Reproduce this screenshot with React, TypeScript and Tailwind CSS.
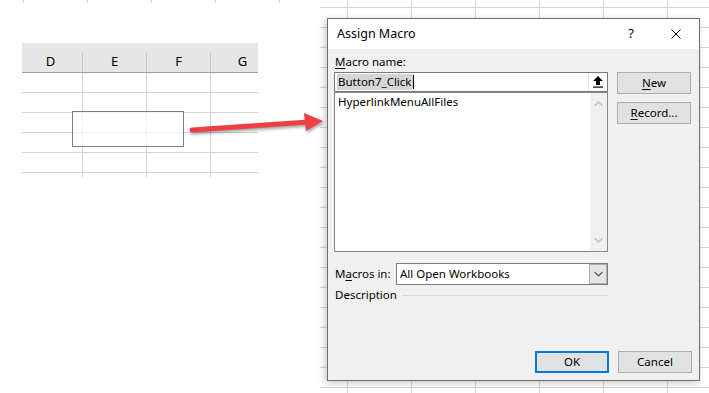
const cols = ['D', 'E', 'F', 'G'];

function Sheet() {
  return (
    <div className="relative w-[236px] overflow-hidden">
      <div className="-ml-[3px] w-[256px]">
        <div className="flex h-[30px] border-b border-[#9e9e9e] bg-[#e6e6e6]">
          {cols.map((c) => (
            <div key={c} className="flex w-[64px] items-end">
              <div className="flex-1 pb-[3px] text-center text-[13px] leading-[16px] text-black">{c}</div>
              <div className="h-[19px] w-px bg-[#c6c6c6]" />
            </div>
          ))}
        </div>
        {[0, 1, 2, 3, 4].map((r) => (
          <div key={r} className="flex h-[20px] border-b border-[#d4d4d4]">
            {cols.map((c) => (
              <div key={c} className="w-[64px] border-r border-[#d4d4d4]" />
            ))}
          </div>
        ))}
        <div className="flex h-[4px]">
          {cols.map((c) => (
            <div key={c} className="w-[64px] border-r border-[#d4d4d4]" />
          ))}
        </div>
      </div>
      {/* the form button drawn on the sheet */}
      <div className="absolute left-[50px] top-[68px] h-[36px] w-[112px] border border-[#7f7f7f] bg-white/70" />
    </div>
  );
}

function Chevron({ up }: { up?: boolean }) {
  return (
    <svg width="9" height="6" viewBox="0 0 9 6" className="text-[#c2c2c2]">
      <path d={up ? 'M0.5 5 L4.5 1 L8.5 5' : 'M0.5 1 L4.5 5 L8.5 1'} fill="none" stroke="currentColor" strokeWidth="1.5" />
    </svg>
  );
}

function Btn({ children, primary }: { children: React.ReactNode; primary?: boolean }) {
  return (
    <div
      className={
        primary
          ? 'flex h-[22px] w-[74px] items-center justify-center border-2 border-[#0078d7] bg-[#e1e1e1] text-black'
          : 'flex h-[22px] w-[74px] items-center justify-center border border-[#adadad] bg-[#e1e1e1] text-black'
      }
    >
      {children}
    </div>
  );
}

function Dialog() {
  return (
    <div className="flex h-[363px] w-[373px] flex-col border border-[#6e6e6e] bg-[#f0f0f0] shadow-[-2px_2px_7px_rgba(0,0,0,0.22)]">
      <div className="flex h-[30px] items-center bg-white pl-[9px] pr-[18px] text-[12.5px] text-black">
        <span className="flex-1">Assign Macro</span>
        <span className="mr-[37px] text-[13px]">?</span>
        <svg width="10" height="10" viewBox="0 0 10 10">
          <path d="M0.5 0.5 L9.5 9.5 M9.5 0.5 L0.5 9.5" stroke="#000" strokeWidth="1" fill="none" />
        </svg>
      </div>

      <div className="flex flex-1 flex-col pb-[7px] pl-[6px] pr-[7px] pt-[5px] text-[11.5px] leading-[16px] text-black">
        <div className="flex gap-[9px]">
          <div className="w-[274px]">
            <div className="h-[16px] pl-[1px]">
              <span className="underline underline-offset-2">M</span>acro name:
            </div>
            <div className="mt-[2px] flex h-[20px] border border-[#7a7a7a] bg-white">
              <div className="flex flex-1 items-center pl-[2px]">
                <span className="bg-[#d5d5d5] px-px">Button7_Click</span>
                <span className="h-[14px] w-px bg-black" />
              </div>
              <div className="flex w-[19px] items-center justify-center border-l border-[#e2e2e2] bg-white">
                <svg width="10" height="12" viewBox="0 0 10 12">
                  <polygon points="5,0 10,5 7,5 7,9 3,9 3,5 0,5" fill="#000" />
                  <rect x="0" y="10.5" width="10" height="1.2" fill="#000" />
                </svg>
              </div>
            </div>
            <div className="flex h-[160px] border border-[#828790] bg-white">
              <div className="flex-1 pl-[3px] pt-[1px]">HyperlinkMenuAllFiles</div>
              <div className="flex w-[17px] flex-col items-center justify-between bg-[#f0f0f0] py-[8px]">
                <Chevron up />
                <Chevron />
              </div>
            </div>
          </div>
          <div className="flex flex-col gap-[8px] pt-[18px]">
            <Btn>
              <span className="underline underline-offset-2">N</span>ew
            </Btn>
            <Btn>
              <span className="underline underline-offset-2">R</span>ecord...
            </Btn>
          </div>
        </div>

        <div className="mt-[11px] flex w-[274px] items-center">
          <div className="w-[62px] pl-[1px]">
            M<span className="underline underline-offset-2">a</span>cros in:
          </div>
          <div className="flex h-[22px] flex-1 border border-[#7a7a7a] bg-white">
            <div className="flex flex-1 items-center pl-[3px]">All Open Workbooks</div>
            <div className="flex w-[18px] items-center justify-center border border-[#adadad] bg-[#e5e5e5]">
              <svg width="9" height="6" viewBox="0 0 9 6">
                <path d="M0.5 1 L4.5 5 L8.5 1" fill="none" stroke="#505050" strokeWidth="1.1" />
              </svg>
            </div>
          </div>
        </div>

        <div className="mt-[2px] flex w-[274px] items-center">
          <span className="pl-[1px]">Description</span>
          <div className="ml-[5px] h-px flex-1 bg-[#dadada]" />
        </div>

        <div className="mt-auto flex justify-end gap-[9px]">
          <Btn primary>OK</Btn>
          <Btn>Cancel</Btn>
        </div>
      </div>
    </div>
  );
}

export default function App() {
  return (
    <div className="relative flex h-[393px] w-[709px] overflow-hidden bg-white font-['Noto_Sans',sans-serif]">
      <div className="flex w-[320px] shrink-0 flex-col">
        <div className="h-[3px] bg-[linear-gradient(90deg,#d4d4d4_1px,transparent_1px)] bg-[size:64px_3px] bg-[position:23px_0]" />
        <div className="pl-[22px] pt-[40px]">
          <Sheet />
        </div>
      </div>

      <div className="flex-1 bg-[linear-gradient(#d4d4d4_1px,transparent_1px),linear-gradient(90deg,#d4d4d4_1px,transparent_1px)] bg-[size:64px_20px] bg-[position:27px_7px] pl-[7px] pt-[18px]">
        <Dialog />
      </div>

      <svg className="pointer-events-none absolute left-0 top-0" width="709" height="393" viewBox="0 0 709 393">
        <g style={{ filter: 'drop-shadow(1px 2px 1.5px rgba(0,0,0,0.35))' }}>
          <line x1="192" y1="130" x2="309" y2="122" stroke="#ef3e46" strokeWidth="5" strokeLinecap="round" />
          <polygon points="304,113 323,121 306,131" fill="#ef3e46" />
        </g>
      </svg>
    </div>
  );
}
